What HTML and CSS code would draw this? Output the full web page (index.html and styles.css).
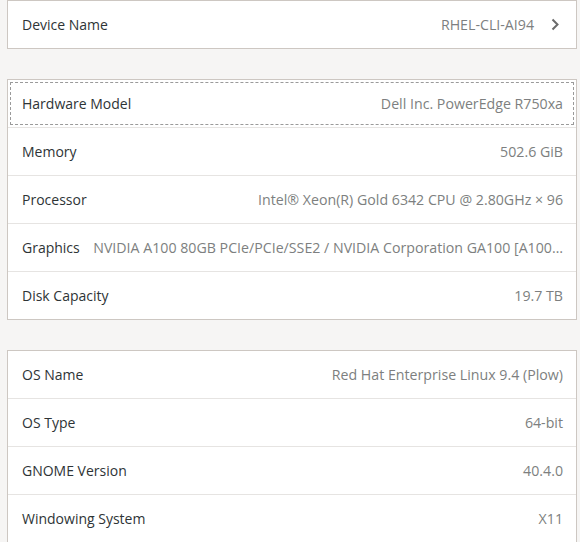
FILE: index.html
```html
<!DOCTYPE html>
<html>
<head>
<meta charset="utf-8">
<link rel="stylesheet" href="styles.css">
</head>
<body>
<div class="page">
  <div class="card">
    <div class="row">
      <span class="label">Device Name</span>
      <span class="value">RHEL-CLI-AI94</span>
      <svg class="chevron" width="9" height="13" viewBox="0 0 9 13"><polyline points="1.5,1.5 6.5,6.5 1.5,11.5" fill="none" stroke="#6b6b6b" stroke-width="2"/></svg>
    </div>
  </div>

  <div class="card">
    <div class="row focused">
      <span class="label">Hardware Model</span>
      <span class="value">Dell Inc. PowerEdge R750xa</span>
    </div>
    <div class="row">
      <span class="label">Memory</span>
      <span class="value">502.6 GiB</span>
    </div>
    <div class="row">
      <span class="label">Processor</span>
      <span class="value">Intel® Xeon(R) Gold 6342 CPU @ 2.80GHz × 96</span>
    </div>
    <div class="row">
      <span class="label">Graphics</span>
      <span class="value">NVIDIA A100 80GB PCIe/PCIe/SSE2 / NVIDIA Corporation GA100 [A100…</span>
    </div>
    <div class="row">
      <span class="label">Disk Capacity</span>
      <span class="value">19.7 TB</span>
    </div>
  </div>

  <div class="card">
    <div class="row">
      <span class="label">OS Name</span>
      <span class="value">Red Hat Enterprise Linux 9.4 (Plow)</span>
    </div>
    <div class="row">
      <span class="label">OS Type</span>
      <span class="value">64-bit</span>
    </div>
    <div class="row">
      <span class="label">GNOME Version</span>
      <span class="value">40.4.0</span>
    </div>
    <div class="row">
      <span class="label">Windowing System</span>
      <span class="value">X11</span>
    </div>
  </div>
</div>
</body>
</html>
```

FILE: styles.css
```css
html, body {
  margin: 0;
  padding: 0;
  background: #f6f5f4;
  overflow: hidden;
}
body {
  font-family: "Open Sans", "Noto Sans", sans-serif;
  font-size: 14px;
  color: #2e3436;
}
.page {
  width: 570px;
  margin-left: 7px;
  display: flex;
  flex-direction: column;
  gap: 30px;
}
.card {
  background: #ffffff;
  border: 1px solid #cdc7c2;
}
.row {
  height: 47px;
  display: flex;
  align-items: center;
  padding: 0 13px 0 14px;
  gap: 12px;
  border-top: 1px solid #e6e4e2;
  box-sizing: content-box;
}
.row:first-child {
  border-top: none;
}
.focused {
  outline: 1px dashed #9a9a9a;
  outline-offset: -3px;
}
.label {
  flex: none;
  white-space: nowrap;
}
.value {
  flex: 1;
  min-width: 0;
  text-align: right;
  font-size: 14.2px;
  color: #7d7f80;
  white-space: nowrap;
}
.chevron {
  flex: none;
  margin-left: 5px;
  margin-right: 3px;
}
```
